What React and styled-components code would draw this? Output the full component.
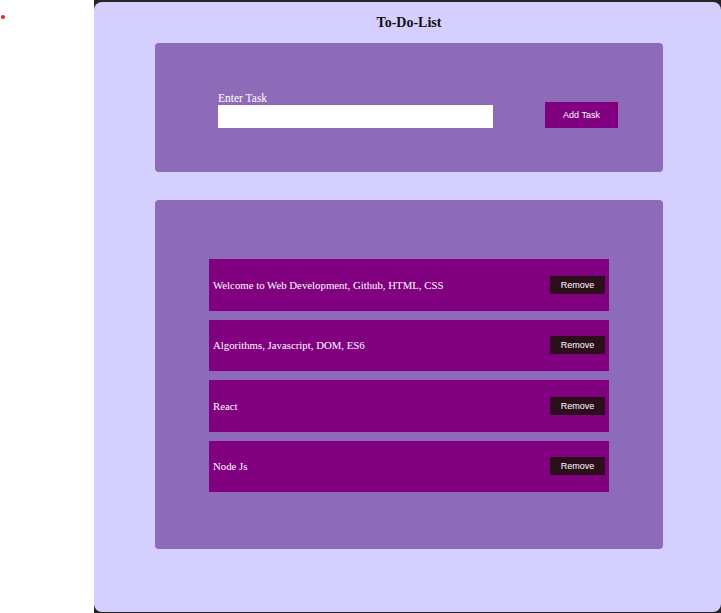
import styled, { createGlobalStyle } from 'styled-components';

const GlobalStyle = createGlobalStyle`
  html, body {
    margin: 0;
    padding: 0;
    background: #ffffff;
    font-family: "Liberation Serif", "Times New Roman", serif;
  }
`;

const Page = styled.div`
  display: flex;
  width: 721px;
  height: 613px;
  overflow: hidden;
`;

const Side = styled.div`
  width: 94px;
  flex-shrink: 0;
  padding-top: 15px;
  padding-left: 1px;
  box-sizing: border-box;

  .dot {
    display: block;
    width: 4px;
    height: 4px;
    border-radius: 50%;
    background: #e5202a;
  }
`;

const Main = styled.main`
  flex: 1;
  background: #242424;
  padding-top: 2px;
`;

const Card = styled.section`
  background: #d5cfff;
  border-radius: 8px;
  height: 610px;
  display: flex;
  flex-direction: column;
  align-items: center;

  .title {
    margin: 13px 0 0;
    font-size: 14px;
    font-weight: 700;
    color: #111;
    line-height: 16px;
    padding-left: 3px;
  }
`;

const Panel = styled.div`
  width: 508px;
  margin-left: 3px;
  background: #8d6bb8;
  border-radius: 4px;
  box-sizing: border-box;
`;

const FormPanel = styled(Panel)`
  margin-top: 12px;
  height: 129px;
  display: flex;
  align-items: flex-end;
  padding: 0 45px 44px 63px;
  gap: 52px;
`;

const Field = styled.label`
  display: flex;
  flex-direction: column;
  color: #fff;
  font-size: 11.5px;
  line-height: 13px;

  input {
    width: 275px;
    height: 23px;
    border: 0;
    margin: 0;
    padding: 0;
    background: #fff;
    outline: none;
  }
`;

const Button = styled.button`
  border: 0;
  color: #fff;
  font-family: "Liberation Sans", Arial, sans-serif;
  font-size: 9px;
  cursor: pointer;
  background: ${({ $dark }) => ($dark ? '#2b0f1a' : '#800080')};
  width: ${({ $dark }) => ($dark ? '55px' : '73px')};
  height: ${({ $dark }) => ($dark ? '18px' : '26px')};
  padding: 0;
`;

const ListPanel = styled(Panel)`
  margin-top: 28px;
  height: 349px;
  padding: 59px 54px 0;
  display: flex;
  flex-direction: column;
  gap: 9px;
`;

const Item = styled.div`
  height: 51.5px;
  flex-shrink: 0;
  background: #800080;
  display: flex;
  align-items: center;
  justify-content: space-between;
  padding: 0 4px;
  color: #fff;
  font-size: 10.8px;
  box-sizing: border-box;
`;

const tasks = [
  'Welcome to Web Development, Github, HTML, CSS',
  'Algorithms, Javascript, DOM, ES6',
  'React',
  'Node Js',
];

export default function App() {
  return (
    <>
      <GlobalStyle />
      <Page>
        <Side>
          <span className="dot" />
        </Side>
        <Main>
          <Card>
            <h1 className="title">To-Do-List</h1>
            <FormPanel>
              <Field>
                Enter Task
                <input type="text" />
              </Field>
              <Button>Add Task</Button>
            </FormPanel>
            <ListPanel>
              {tasks.map((t) => (
                <Item key={t}>
                  <span>{t}</span>
                  <Button $dark>Remove</Button>
                </Item>
              ))}
            </ListPanel>
          </Card>
        </Main>
      </Page>
    </>
  );
}
